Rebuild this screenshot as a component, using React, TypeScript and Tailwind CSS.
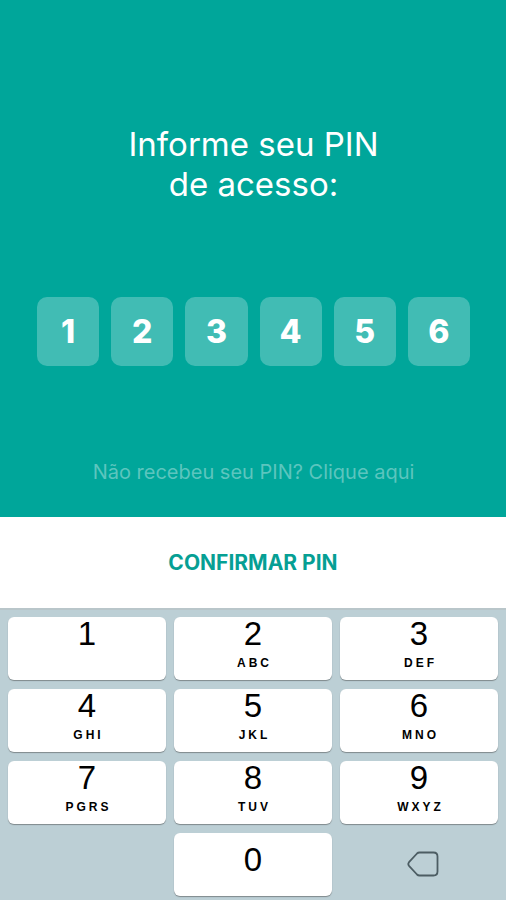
import { useState } from 'react';

const keys = [
  { digit: '1', letters: '' },
  { digit: '2', letters: 'ABC' },
  { digit: '3', letters: 'DEF' },
  { digit: '4', letters: 'GHI' },
  { digit: '5', letters: 'JKL' },
  { digit: '6', letters: 'MNO' },
  { digit: '7', letters: 'PGRS' },
  { digit: '8', letters: 'TUV' },
  { digit: '9', letters: 'WXYZ' },
];

const PIN_LENGTH = 6;

function Key({ digit, letters, onPress }: { digit: string; letters?: string; onPress: (d: string) => void }) {
  return (
    <button
      type="button"
      onClick={() => onPress(digit)}
      className={`flex h-[63px] flex-col items-center rounded-md bg-white text-black shadow-[0_1px_1px_#7f898c] ${
        letters === undefined ? 'col-start-2 justify-center pb-2.5' : ''
      }`}
    >
      <span className="text-[33px] leading-[34px]">{digit}</span>
      {letters && <span className="pl-[3px] pt-1 text-xs font-bold leading-4 tracking-[3px]">{letters}</span>}
    </button>
  );
}

export default function App() {
  const [pin, setPin] = useState('123456');
  const press = (d: string) => setPin((p) => (p.length < PIN_LENGTH ? p + d : p));

  return (
    <main className="flex min-h-screen flex-col bg-[#00a69a] font-['Inter',sans-serif]">
      <section className="flex grow flex-col items-center pl-[37px] pr-9 pt-[124px] text-center">
        <h1 className="text-[33px] leading-10 text-white">
          Informe seu PIN
          <br />
          de acesso:
        </h1>
        <div className="mt-[93px] grid w-full grid-cols-6 gap-3">
          {Array.from({ length: PIN_LENGTH }, (_, i) => (
            <input
              key={i}
              aria-label={`Dígito ${i + 1}`}
              readOnly
              inputMode="numeric"
              value={pin[i] ?? ''}
              className="h-[69px] w-full min-w-0 rounded-[10px] bg-[#41bcb4] text-center text-[32px] font-extrabold text-white outline-none"
            />
          ))}
        </div>
        <a href="#pin" className="mb-[31px] mt-[92px] text-xl leading-7 text-[#5cc5be]">
          Não recebeu seu PIN? Clique aqui
        </a>
      </section>
      <button type="button" className="h-[91px] bg-white text-[21px] font-bold text-[#069f94]">
        CONFIRMAR PIN
      </button>
      <section
        aria-label="Teclado"
        className="grid grid-cols-3 gap-x-2 gap-y-[9px] border-t-2 border-[#b9c6ca] bg-[#bccfd5] px-2 pb-[5px] pt-[7px] font-['Liberation_Sans',Arial,sans-serif]"
      >
        {keys.map((k) => (
          <Key key={k.digit} digit={k.digit} letters={k.letters} onPress={press} />
        ))}
        <Key digit="0" onPress={press} />
        <button
          type="button"
          aria-label="Apagar"
          onClick={() => setPin((p) => p.slice(0, -1))}
          className="flex h-[63px] items-center justify-center pb-0.5 pl-2"
        >
          <svg width="32" height="26" viewBox="0 0 32 26" fill="none" stroke="#4c5d63" strokeWidth="1.8" strokeLinejoin="round">
            <path d="M12.5 1.5H26.5Q30.5 1.5 30.5 5.5V20.5Q30.5 24.5 26.5 24.5H12.5Q11 24.5 10 23.5L2 14.8Q.6 13 2 11.2L10 2.5Q11 1.5 12.5 1.5Z" />
          </svg>
        </button>
      </section>
    </main>
  );
}
